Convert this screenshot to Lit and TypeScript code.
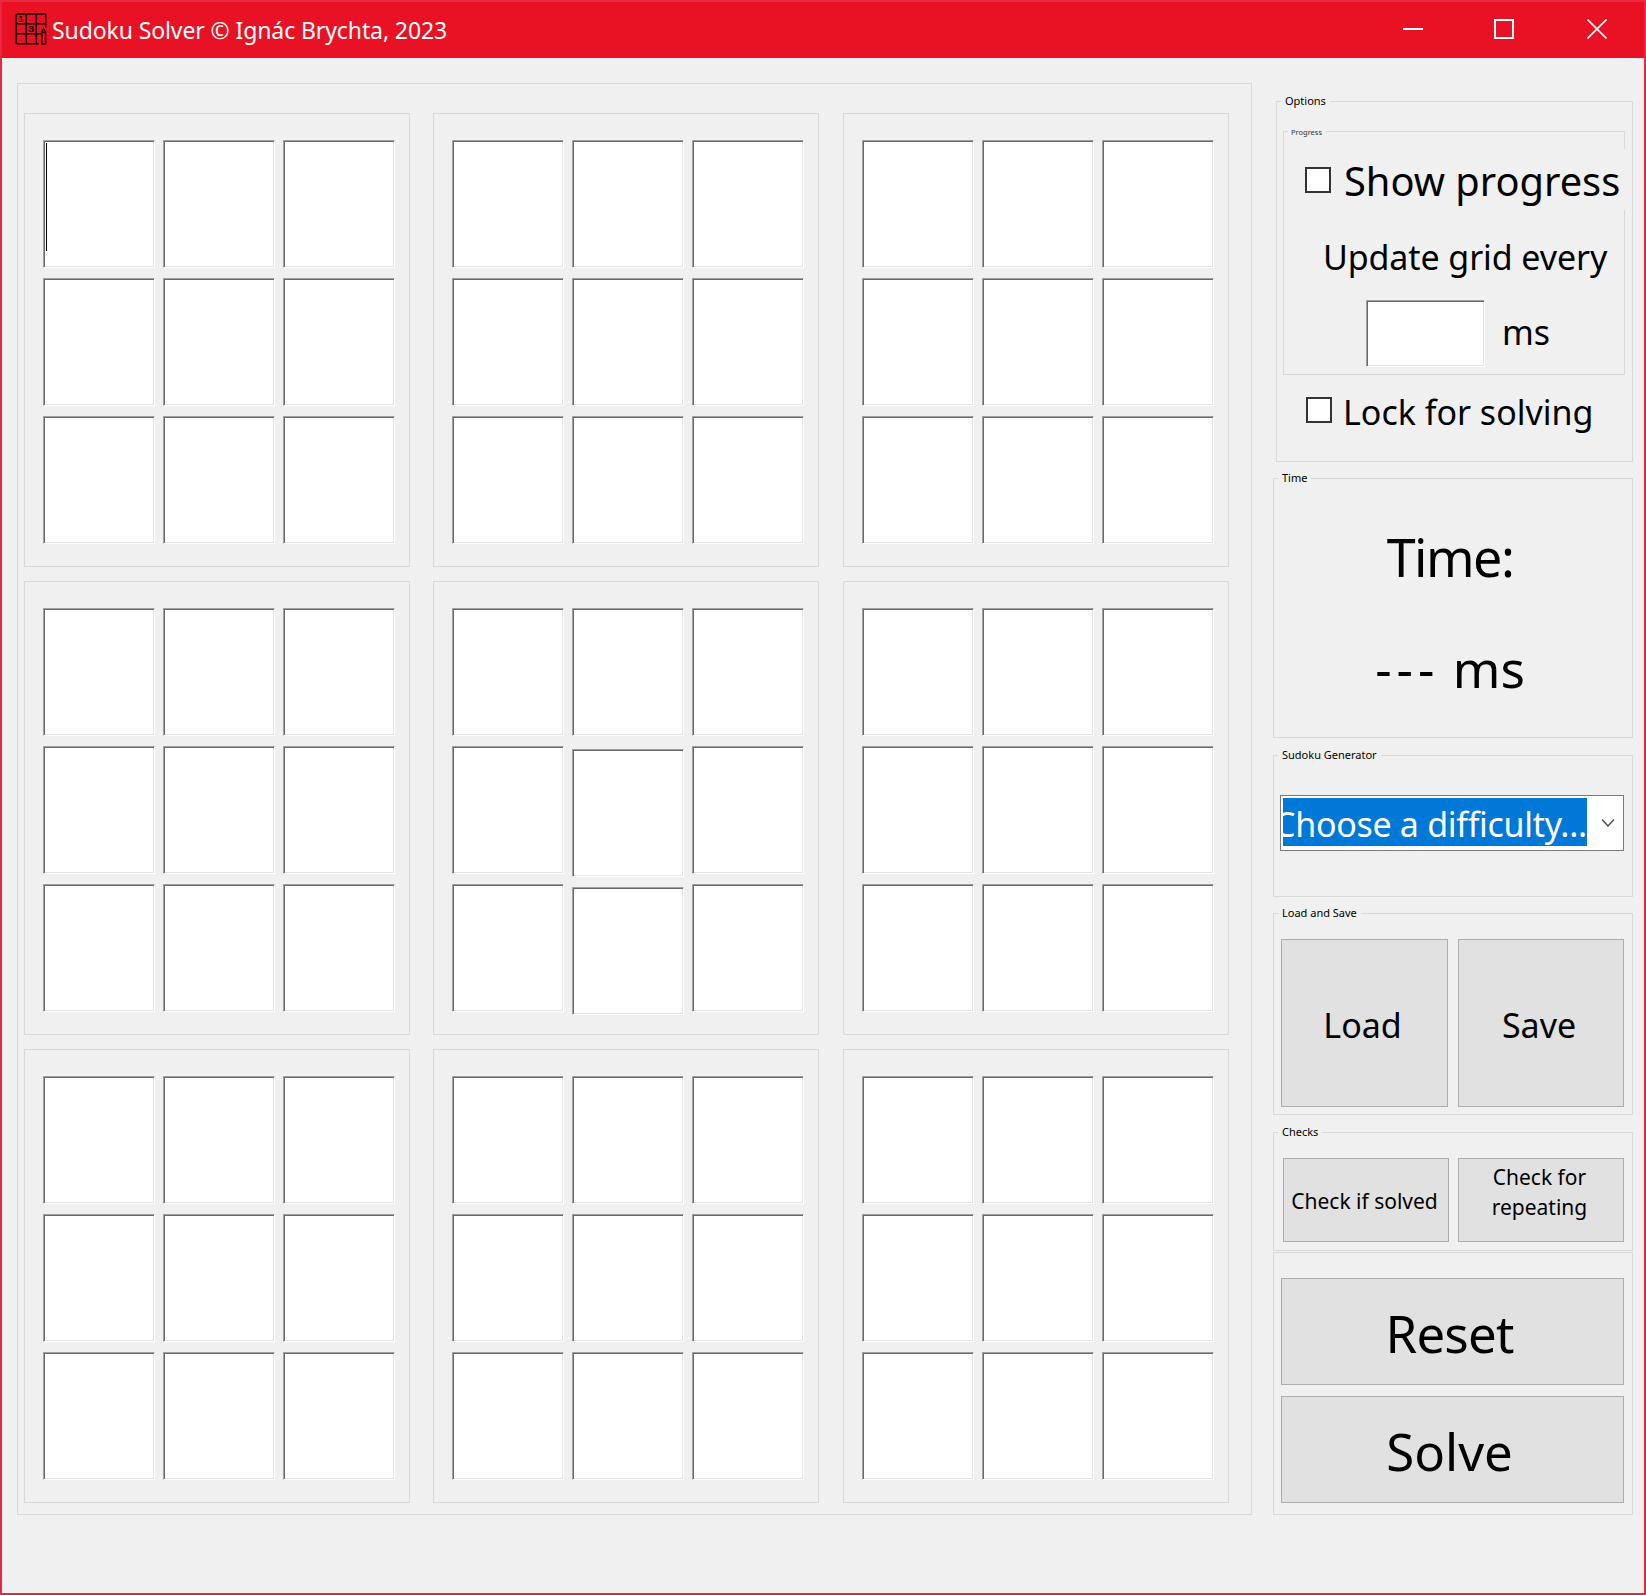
import { LitElement, html, css } from "lit";
import { customElement } from "lit/decorators.js";

@customElement("app-root")
export class AppRoot extends LitElement {
  static styles = css`
    :host {
      display: block;
      width: 1646px;
      height: 1595px;
      box-sizing: border-box;
      background: #f0f0f0;
      border: 2px solid #e8283e;
      border-top-color: #ea2a3f;
      font-family: "Noto Sans", "Open Sans", sans-serif;
      color: #000;
      overflow: hidden;
    }
    .titlebar {
      height: 56px;
      background: #e81224;
      color: #fff;
      display: flex;
      align-items: center;
      padding-left: 13px;
    }
    .logo { width: 32px; height: 32px; margin-top: -2px; flex: none; }
    .title { font-size: 23px; line-height: 30px; margin-left: 5px; letter-spacing: -0.1px; white-space: nowrap; }
    .caption { margin-left: auto; display: flex; padding-right: 37px; margin-top: -2px; }
    .caption svg { display: block; width: 20px; height: 20px; }
    .caption .max { margin-left: 71px; }
    .caption .close { margin-left: 73px; }
    .main { display: flex; padding: 25px 0 0 15px; align-items: flex-start; }
    .frame {
      box-sizing: border-box;
      width: 1235px;
      height: 1432px;
      border: 1px solid #d9d9d9;
      padding: 29px 0 0 6px;
      display: grid;
      grid-template-columns: 386px 387px 386px;
      grid-auto-rows: 454px;
      column-gap: 23px;
      row-gap: 14px;
    }
    .block {
      box-sizing: border-box;
      width: 386px;
      border: 1px solid #d9d9d9;
      padding: 26px 0 0 18px;
      display: grid;
      grid-template-columns: repeat(3, 112px);
      grid-auto-rows: 128px;
      column-gap: 8px;
      row-gap: 10px;
    }
    .cell, .field {
      box-sizing: border-box;
      background: #fff;
      border: 1px solid;
      border-color: #a0a0a0 #fff #fff #a0a0a0;
      box-shadow: inset 1px 1px #696969, inset -1px -1px #e3e3e3;
      position: relative;
    }
    .cell.shift { margin-top: 3px; margin-bottom: -3px; }
    .caret {
      position: absolute;
      left: 2px;
      top: 2px;
      width: 1px;
      height: 108px;
      background: #000;
    }
    .side { width: 360px; margin: 18px 0 0 21px; display: flex; flex-direction: column; }
    .group { box-sizing: border-box; border: 1px solid #d9d9d9; position: relative; flex: none; }
    .legend {
      position: absolute;
      top: -10px;
      left: 4px;
      padding: 0 4px;
      background: #f0f0f0;
      font-size: 11px;
      line-height: 18px;
      white-space: nowrap;
    }
    .options { margin-left: 3px; height: 361px; padding: 29px 0 0 6px; }
    .progress { width: 342px; height: 244px; padding-top: 17px; }
    .progress > .legend { font-size: 7.5px; line-height: 10px; top: -5px; left: 4px; color: #333; padding: 0 3px; }
    .check-row {
      height: 61px;
      margin-right: -1px;
      background: #f0f0f0;
      display: flex;
      align-items: center;
      padding-left: 21px;
      position: relative;
    }
    .check-row input, .lock input {
      appearance: none;
      margin: 0;
      width: 26px;
      height: 26px;
      box-sizing: border-box;
      border: 2px solid #333;
      background: #fff;
      flex: none;
    }
    .big { font-size: 34px; line-height: 48px; white-space: nowrap; }
    .check-row .label { font-size: 39.8px; line-height: 52px; margin: 2px 0 0 13px; white-space: nowrap; }
    .update { padding-left: 39px; margin-top: 23px; letter-spacing: -0.1px; }
    .interval { display: flex; align-items: center; padding-left: 82px; margin-top: 19px; }
    .field { width: 119px; height: 67px; }
    .interval .big { margin: -4px 0 0 17px; }
    .lock { display: flex; align-items: center; margin: 11px 0 0 23px; height: 48px; }
    .lock .big { margin: 4px 0 0 11px; }
    .time { height: 260px; margin-top: 16px; text-align: center; padding: 42px 6px 0 0; }
    .time .huge + .huge { margin-top: 39px; font-size: 51px; }
    .huge { font-size: 52px; line-height: 72px; white-space: nowrap; }
    .word { letter-spacing: -1.5px; }
    .dashes { letter-spacing: 5px; }
    .generator { height: 142px; margin-top: 17px; padding: 39px 8px 0 6px; }
    .combo {
      box-sizing: border-box;
      height: 56px;
      width: 344px;
      background: #fff;
      border: 1px solid #7a7a7a;
      padding: 2px;
      display: flex;
      align-items: stretch;
    }
    .selected {
      width: 304px;
      height: 48px;
      background: #0078d7;
      color: #fff;
      overflow: hidden;
      display: flex;
      align-items: center;
    }
    .selected span { margin: 4px 0 0 -9px; font-size: 34px; line-height: 48px; letter-spacing: -0.3px; white-space: nowrap; }
    .chevron { display: block; width: 16px; height: 10px; margin: 20px 0 0 13px; flex: none; }
    .load { height: 202px; margin-top: 16px; padding: 25px 8px 0 7px; display: flex; }
    .btn {
      box-sizing: border-box;
      background: #e1e1e1;
      border: 1px solid #adadad;
      display: flex;
      align-items: center;
      justify-content: center;
      text-align: center;
      flex: none;
      padding: 0;
      font-family: inherit;
      color: #000;
    }
    .load .btn { height: 168px; font-size: 34px; padding: 4px 4px 0 0; }
    .load .btn.first { width: 167px; margin-right: 10px; }
    .load .btn.second { width: 166px; }
    .checks { height: 119px; margin-top: 17px; padding: 25px 8px 0 9px; display: flex; }
    .checks .btn { height: 84px; font-size: 21px; line-height: 30px; padding: 2px 3px 0 0; }
    .checks .btn.first { width: 166px; margin-right: 9px; }
    .checks .btn.second { width: 166px; padding: 0 3px 16px 0; }
    .actions { height: 263px; margin-top: 1px; padding: 25px 8px 0 7px; display: flex; flex-direction: column; }
    .actions .btn { height: 107px; width: 343px; font-size: 51px; padding: 2px 6px 0 0; }
    .actions .btn + .btn { margin-top: 11px; }
    .tight { letter-spacing: -0.8px; }
  `;

  private cells(isCenter: boolean, first: boolean) {
    const out = [];
    for (let i = 0; i < 9; i++) {
      const shifted = isCenter && (i === 4 || i === 7);
      out.push(html`<div class="cell ${shifted ? "shift" : ""}">${first && i === 0 ? html`<div class="caret"></div>` : ""}</div>`);
    }
    return out;
  }

  render() {
    const blocks = [];
    for (let b = 0; b < 9; b++) {
      blocks.push(html`<div class="block">${this.cells(b === 4, b === 0)}</div>`);
    }
    return html`
      <div class="titlebar">
        <svg class="logo" viewBox="0 0 32 32" fill="none" stroke="#140004">
          <path stroke-width="1.5" d="M1.3 1H30.7M1.3 10.7H30.7M1.3 20.7H26M1.3 30.7H23.5M1.3 1V30.7M11.3 1V30.7M21.3 1V30.7M30.7 1V15" />
          <text x="3.6" y="8.8" font-size="8.5" font-weight="700" font-family="Liberation Sans" fill="#140004" stroke="none">1</text>
          <text x="12.8" y="18.8" font-size="8.5" font-weight="700" font-family="Liberation Sans" fill="#140004" stroke="none" textLength="6.5" lengthAdjust="spacingAndGlyphs">3</text>
          <path stroke-width="1.4" fill="#e81224" d="M26.8 31V19L28.6 15.6L30.6 19V31Z" />
          <path stroke-width="1.2" d="M26.8 19.5H30.6" />
        </svg>
        <div class="title">Sudoku Solver © Ignác Brychta, 2023</div>
        <div class="caption">
          <svg viewBox="0 0 20 20" stroke="#fff" stroke-width="2"><path d="M0 10H20" /></svg>
          <svg class="max" viewBox="0 0 20 20" fill="none" stroke="#fff" stroke-width="2"><rect x="1" y="1" width="18" height="18" /></svg>
          <svg class="close" viewBox="0 0 20 20" stroke="#fff" stroke-width="1.6"><path d="M0.5 0.5L19.5 19.5M19.5 0.5L0.5 19.5" /></svg>
        </div>
      </div>
      <div class="main">
        <div class="frame">${blocks}</div>
        <div class="side">
          <div class="group options">
            <div class="legend">Options</div>
            <div class="group progress">
              <div class="legend">Progress</div>
              <div class="check-row">
                <input type="checkbox" />
                <span class="label">Show progress</span>
              </div>
              <div class="big update">Update grid every</div>
              <div class="interval">
                <div class="field"></div>
                <span class="big">ms</span>
              </div>
            </div>
            <div class="lock">
              <input type="checkbox" />
              <span class="big">Lock for solving</span>
            </div>
          </div>
          <div class="group time">
            <div class="legend">Time</div>
            <div class="huge word">Time:</div>
            <div class="huge"><span class="dashes">---</span> ms</div>
          </div>
          <div class="group generator">
            <div class="legend">Sudoku Generator</div>
            <div class="combo">
              <div class="selected"><span>Choose a difficulty...</span></div>
              <svg class="chevron" viewBox="0 0 16 10" fill="none" stroke="#444" stroke-width="1.3"><path d="M2 1.5L8 8L14 1.5" /></svg>
            </div>
          </div>
          <div class="group load">
            <div class="legend">Load and Save</div>
            <button class="btn first">Load</button>
            <button class="btn second">Save</button>
          </div>
          <div class="group checks">
            <div class="legend">Checks</div>
            <button class="btn first">Check if solved</button>
            <button class="btn second">Check for<br />repeating</button>
          </div>
          <div class="group actions">
            <button class="btn"><span class="tight">Reset</span></button>
            <button class="btn">Solve</button>
          </div>
        </div>
      </div>
    `;
  }
}
